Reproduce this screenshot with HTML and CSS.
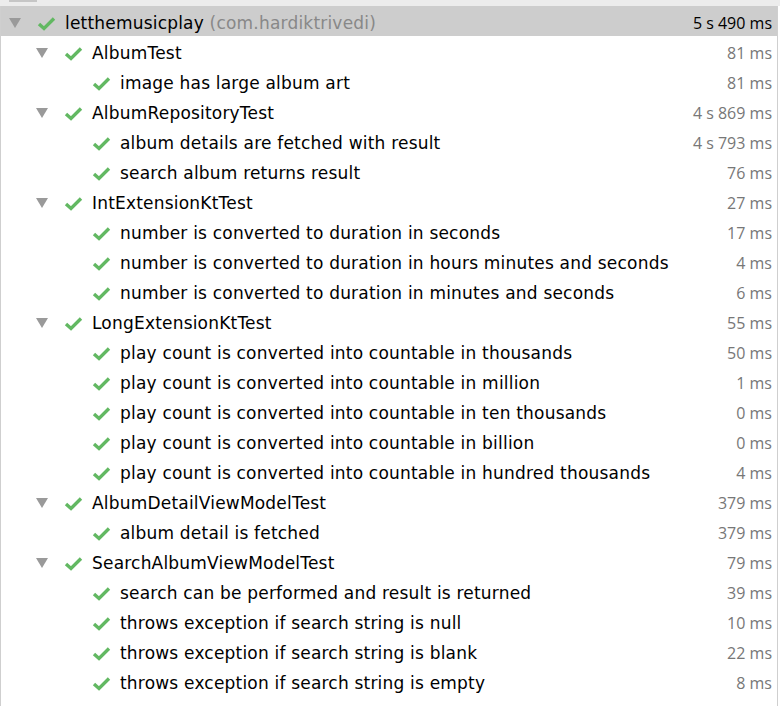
FILE: index.html
```html
<!DOCTYPE html>
<html>
<head>
<meta charset="utf-8">
<link rel="stylesheet" href="styles.css">
</head>
<body>
<div class="window">
  <div class="topstrip"><div class="tab"></div></div>
  <div class="tree">
    <div class="row selected l0"><span class="tog"><i class="tri"></i></span><svg class="chk" viewBox="0 0 19 15"><path d="M2 8 L7 12.5 L17 2.5"/></svg><span class="name">letthemusicplay <span class="pkg">(com.hardiktrivedi)</span></span><span class="dur strong">5 s 490 ms</span></div>

    <div class="row l1"><span class="tog"><i class="tri"></i></span><svg class="chk" viewBox="0 0 19 15"><path d="M2 8 L7 12.5 L17 2.5"/></svg><span class="name">AlbumTest</span><span class="dur">81 ms</span></div>
    <div class="row l2"><span class="tog"></span><svg class="chk" viewBox="0 0 19 15"><path d="M2 8 L7 12.5 L17 2.5"/></svg><span class="name">image has large album art</span><span class="dur">81 ms</span></div>

    <div class="row l1"><span class="tog"><i class="tri"></i></span><svg class="chk" viewBox="0 0 19 15"><path d="M2 8 L7 12.5 L17 2.5"/></svg><span class="name">AlbumRepositoryTest</span><span class="dur">4 s 869 ms</span></div>
    <div class="row l2"><span class="tog"></span><svg class="chk" viewBox="0 0 19 15"><path d="M2 8 L7 12.5 L17 2.5"/></svg><span class="name">album details are fetched with result</span><span class="dur">4 s 793 ms</span></div>
    <div class="row l2"><span class="tog"></span><svg class="chk" viewBox="0 0 19 15"><path d="M2 8 L7 12.5 L17 2.5"/></svg><span class="name">search album returns result</span><span class="dur">76 ms</span></div>

    <div class="row l1"><span class="tog"><i class="tri"></i></span><svg class="chk" viewBox="0 0 19 15"><path d="M2 8 L7 12.5 L17 2.5"/></svg><span class="name">IntExtensionKtTest</span><span class="dur">27 ms</span></div>
    <div class="row l2"><span class="tog"></span><svg class="chk" viewBox="0 0 19 15"><path d="M2 8 L7 12.5 L17 2.5"/></svg><span class="name">number is converted to duration in seconds</span><span class="dur">17 ms</span></div>
    <div class="row l2"><span class="tog"></span><svg class="chk" viewBox="0 0 19 15"><path d="M2 8 L7 12.5 L17 2.5"/></svg><span class="name">number is converted to duration in hours minutes and seconds</span><span class="dur">4 ms</span></div>
    <div class="row l2"><span class="tog"></span><svg class="chk" viewBox="0 0 19 15"><path d="M2 8 L7 12.5 L17 2.5"/></svg><span class="name">number is converted to duration in minutes and seconds</span><span class="dur">6 ms</span></div>

    <div class="row l1"><span class="tog"><i class="tri"></i></span><svg class="chk" viewBox="0 0 19 15"><path d="M2 8 L7 12.5 L17 2.5"/></svg><span class="name">LongExtensionKtTest</span><span class="dur">55 ms</span></div>
    <div class="row l2"><span class="tog"></span><svg class="chk" viewBox="0 0 19 15"><path d="M2 8 L7 12.5 L17 2.5"/></svg><span class="name">play count is converted into countable in thousands</span><span class="dur">50 ms</span></div>
    <div class="row l2"><span class="tog"></span><svg class="chk" viewBox="0 0 19 15"><path d="M2 8 L7 12.5 L17 2.5"/></svg><span class="name">play count is converted into countable in million</span><span class="dur">1 ms</span></div>
    <div class="row l2"><span class="tog"></span><svg class="chk" viewBox="0 0 19 15"><path d="M2 8 L7 12.5 L17 2.5"/></svg><span class="name">play count is converted into countable in ten thousands</span><span class="dur">0 ms</span></div>
    <div class="row l2"><span class="tog"></span><svg class="chk" viewBox="0 0 19 15"><path d="M2 8 L7 12.5 L17 2.5"/></svg><span class="name">play count is converted into countable in billion</span><span class="dur">0 ms</span></div>
    <div class="row l2"><span class="tog"></span><svg class="chk" viewBox="0 0 19 15"><path d="M2 8 L7 12.5 L17 2.5"/></svg><span class="name">play count is converted into countable in hundred thousands</span><span class="dur">4 ms</span></div>

    <div class="row l1"><span class="tog"><i class="tri"></i></span><svg class="chk" viewBox="0 0 19 15"><path d="M2 8 L7 12.5 L17 2.5"/></svg><span class="name">AlbumDetailViewModelTest</span><span class="dur">379 ms</span></div>
    <div class="row l2"><span class="tog"></span><svg class="chk" viewBox="0 0 19 15"><path d="M2 8 L7 12.5 L17 2.5"/></svg><span class="name">album detail is fetched</span><span class="dur">379 ms</span></div>

    <div class="row l1"><span class="tog"><i class="tri"></i></span><svg class="chk" viewBox="0 0 19 15"><path d="M2 8 L7 12.5 L17 2.5"/></svg><span class="name">SearchAlbumViewModelTest</span><span class="dur">79 ms</span></div>
    <div class="row l2"><span class="tog"></span><svg class="chk" viewBox="0 0 19 15"><path d="M2 8 L7 12.5 L17 2.5"/></svg><span class="name">search can be performed and result is returned</span><span class="dur">39 ms</span></div>
    <div class="row l2"><span class="tog"></span><svg class="chk" viewBox="0 0 19 15"><path d="M2 8 L7 12.5 L17 2.5"/></svg><span class="name">throws exception if search string is null</span><span class="dur">10 ms</span></div>
    <div class="row l2"><span class="tog"></span><svg class="chk" viewBox="0 0 19 15"><path d="M2 8 L7 12.5 L17 2.5"/></svg><span class="name">throws exception if search string is blank</span><span class="dur">22 ms</span></div>
    <div class="row l2"><span class="tog"></span><svg class="chk" viewBox="0 0 19 15"><path d="M2 8 L7 12.5 L17 2.5"/></svg><span class="name">throws exception if search string is empty</span><span class="dur">8 ms</span></div>
  </div>
</div>
</body>
</html>
```

FILE: styles.css
```css
html, body {
  margin: 0;
  padding: 0;
  background: #ffffff;
}
.window {
  width: 780px;
  height: 706px;
  display: flex;
  flex-direction: column;
  overflow: hidden;
  background: #ffffff;
}
.topstrip {
  height: 6px;
  background: #ececec;
  flex: none;
}
.tab {
  margin-left: 9px;
  width: 28px;
  height: 2px;
  background: #c6c6c6;
}
.tree {
  flex: 1;
  border-left: 1px solid #cfcfcf;
  border-right: 1px solid #cfcfcf;
  box-sizing: border-box;
  width: 778px;
  font-family: "DejaVu Sans", "Liberation Sans", sans-serif;
  font-size: 17px;
  letter-spacing: 0.2px;
  color: #000;
}
.row {
  height: 30px;
  display: flex;
  align-items: center;
  padding-top: 4px;
  padding-right: 5px;
  box-sizing: border-box;
}
.row.selected {
  background: #cdcdcd;
}
.l0 { padding-left: 8px; }
.l1 { padding-left: 35px; }
.l2 { padding-left: 63px; }
.tog {
  width: 28px;
  flex: none;
  display: flex;
  align-items: center;
}
.tri {
  display: block;
  width: 0;
  height: 0;
  border-left: 6px solid transparent;
  border-right: 6px solid transparent;
  border-top: 10px solid #9a9a9a;
  margin-top: 0;
}
.chk {
  width: 19px;
  height: 15px;
  flex: none;
  margin-right: 9px;
}
.chk path {
  fill: none;
  stroke: #62b862;
  stroke-width: 3.4;
  stroke-linecap: butt;
  stroke-linejoin: miter;
}
.name {
  flex: 1;
  white-space: nowrap;
}
.pkg {
  color: #888888;
}
.dur {
  font-family: "Open Sans", "Noto Sans", sans-serif;
  font-size: 16px;
  letter-spacing: 0;
  color: #777777;
  white-space: nowrap;
}
.dur.strong {
  color: #000;
}
```
